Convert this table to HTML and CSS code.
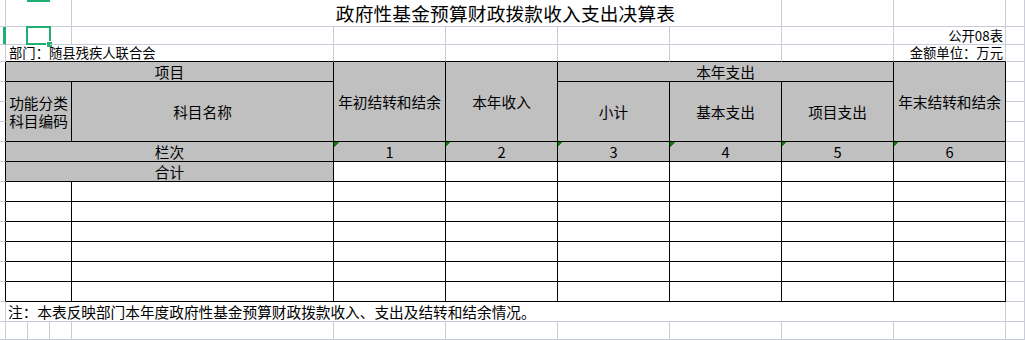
FILE: index.html
```html
<!DOCTYPE html>
<html lang="zh-CN">
<head>
<meta charset="utf-8">
<title>政府性基金预算财政拨款收入支出决算表</title>
<link rel="stylesheet" href="styles.css">
</head>
<body>
<div class="sheet">
  <!-- row 1 -->
  <div class="c"></div>
  <div class="c s3"><span class="colhl"></span></div>
  <div class="c s5 title">政府性基金预算财政拨款收入支出决算表</div>
  <div class="c"></div>
  <div class="c"></div>
  <div class="c"></div>
  <!-- row 2 -->
  <div class="c rowhl"></div>
  <div class="c"></div>
  <div class="c sel"><span class="selbox"></span><span class="handle"></span></div>
  <div class="c"></div>
  <div class="c"></div>
  <div class="c"></div>
  <div class="c"></div>
  <div class="c"></div>
  <div class="c"></div>
  <div class="c"></div>
  <div class="c small right">公开08表</div>
  <div class="c"></div>
  <!-- row 3 -->
  <div class="c"></div>
  <div class="c s4 small bb dept">部门：随县残疾人联合会</div>
  <div class="c bb"></div>
  <div class="c bb"></div>
  <div class="c bb"></div>
  <div class="c bb"></div>
  <div class="c bb"></div>
  <div class="c small right bb">金额单位：万元</div>
  <div class="c"></div>
  <!-- row 4 -->
  <div class="c br"></div>
  <div class="c s4 h">项目</div>
  <div class="c r4 h">年初结转和结余</div>
  <div class="c r4 h">本年收入</div>
  <div class="c s3 h">本年支出</div>
  <div class="c r4 h">年末结转和结余</div>
  <div class="c"></div>
  <!-- row 5 -->
  <div class="c br"></div>
  <div class="c s3 r3 h two">功能分类<br>科目编码</div>
  <div class="c r3 h">科目名称</div>
  <div class="c r3 h">小计</div>
  <div class="c r3 h">基本支出</div>
  <div class="c r3 h">项目支出</div>
  <div class="c"></div>
  <!-- row 6 -->
  <div class="c br"></div>
  <div class="c"></div>
  <!-- row 7 -->
  <div class="c br"></div>
  <div class="c"></div>
  <!-- row 8 -->
  <div class="c br"></div>
  <div class="c s4 h">栏次</div>
  <div class="c h n">1</div>
  <div class="c h n">2</div>
  <div class="c h n">3</div>
  <div class="c h n">4</div>
  <div class="c h n">5</div>
  <div class="c h n">6</div>
  <div class="c"></div>
  <!-- row 9 -->
  <div class="c br"></div>
  <div class="c s4 h">合计</div>
  <div class="c b"></div><div class="c b"></div><div class="c b"></div><div class="c b"></div><div class="c b"></div><div class="c b"></div>
  <div class="c"></div>
  <!-- rows 10-15 -->
  <div class="c br"></div><div class="c s3 b"></div><div class="c b"></div><div class="c b"></div><div class="c b"></div><div class="c b"></div><div class="c b"></div><div class="c b"></div><div class="c b"></div><div class="c"></div>
  <div class="c br"></div><div class="c s3 b"></div><div class="c b"></div><div class="c b"></div><div class="c b"></div><div class="c b"></div><div class="c b"></div><div class="c b"></div><div class="c b"></div><div class="c"></div>
  <div class="c br"></div><div class="c s3 b"></div><div class="c b"></div><div class="c b"></div><div class="c b"></div><div class="c b"></div><div class="c b"></div><div class="c b"></div><div class="c b"></div><div class="c"></div>
  <div class="c br"></div><div class="c s3 b"></div><div class="c b"></div><div class="c b"></div><div class="c b"></div><div class="c b"></div><div class="c b"></div><div class="c b"></div><div class="c b"></div><div class="c"></div>
  <div class="c br"></div><div class="c s3 b"></div><div class="c b"></div><div class="c b"></div><div class="c b"></div><div class="c b"></div><div class="c b"></div><div class="c b"></div><div class="c b"></div><div class="c"></div>
  <div class="c br"></div><div class="c s3 b"></div><div class="c b"></div><div class="c b"></div><div class="c b"></div><div class="c b"></div><div class="c b"></div><div class="c b"></div><div class="c b"></div><div class="c"></div>
  <!-- row 16 -->
  <div class="c"></div>
  <div class="c s10 note">注：本表反映部门本年度政府性基金预算财政拨款收入、支出及结转和结余情况。</div>
  <div class="c"></div>
  <!-- row 17 -->
  <div class="c"></div><div class="c"></div><div class="c"></div><div class="c"></div><div class="c"></div><div class="c"></div><div class="c"></div><div class="c"></div><div class="c"></div><div class="c"></div><div class="c"></div><div class="c"></div>
</div>
</body>
</html>
```

FILE: styles.css
```css
* { box-sizing: border-box; }

html, body {
  margin: 0;
  padding: 0;
  background: #ffffff;
}

body {
  width: 1025px;
  height: 340px;
  overflow: hidden;
  font-family: "Noto Sans CJK SC", "Noto Sans", sans-serif;
  color: #000;
}

.sheet {
  --grid: #c9ccd8;
  --sel: #21b074;
  display: grid;
  grid-template-columns: 6px 22px 22px 22px 262px repeat(6, 112px) 19px;
  grid-template-rows: 27px 18px 17px repeat(13, 20px) 18px;
}

.c {
  position: relative;
  display: flex;
  align-items: center;
  min-width: 0;
  white-space: nowrap;
  border-right: 1px solid var(--grid);
  border-bottom: 1px solid var(--grid);
  font-size: 14.67px;
  line-height: 18px;
}

.s3 { grid-column: span 3; }
.s4 { grid-column: span 4; }
.s5 { grid-column: span 5; }
.s10 { grid-column: span 10; }
.r3 { grid-row: span 3; }
.r4 { grid-row: span 4; }

.b { border-right-color: #000; border-bottom-color: #000; }
.bb { border-bottom-color: #000; }
.br { border-right-color: #000; }

.h {
  background-color: #c0c0c0;
  border-right-color: #000;
  border-bottom-color: #000;
  justify-content: center;
  text-align: center;
}

.two { line-height: 18px; }

.n {
  background-image: linear-gradient(135deg, #0c7f0c 50%, transparent 50%);
  background-size: 5px 5px;
  background-repeat: no-repeat;
  background-position: 0 0;
}

.title {
  font-size: 18.67px;
  line-height: 22px;
  justify-content: center;
  align-items: flex-end;
  padding-left: 158px;
  padding-bottom: 2px;
  letter-spacing: 0.2px;
}

.small { font-size: 13.33px; line-height: 16px; }
.right { justify-content: flex-end; padding-right: 2px; }
.dept { padding-left: 3px; align-items: flex-end; }

.note { padding-left: 2px; }

/* Excel-like selection decorations */
.colhl {
  position: absolute;
  left: 21px;
  top: 0;
  width: 23px;
  height: 2px;
  background: var(--sel);
}

.rowhl {
  border-right-color: var(--sel);
  box-shadow: inset -2px 0 0 var(--sel);
}

.selbox {
  position: absolute;
  left: -2px;
  top: -1px;
  width: 25px;
  height: 19px;
  border: 2px solid var(--sel);
}

.handle {
  position: absolute;
  left: 18px;
  top: 14px;
  width: 6px;
  height: 6px;
  background: var(--sel);
  border-top: 1px solid #fff;
  border-left: 1px solid #fff;
}
```
